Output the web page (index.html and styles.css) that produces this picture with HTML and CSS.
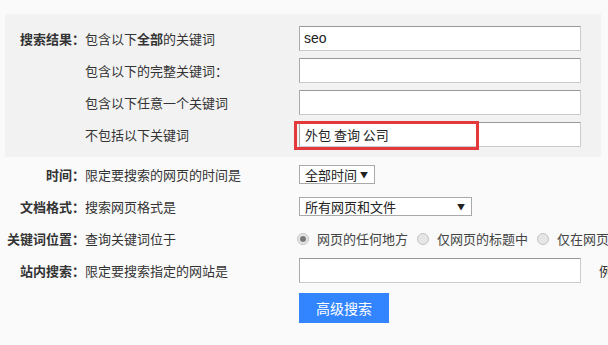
FILE: index.html
```html
<!DOCTYPE html>
<html lang="zh-CN">
<head>
<meta charset="utf-8">
<title>高级搜索</title>
<link rel="stylesheet" href="styles.css">
</head>
<body>
<div class="page">
  <div class="panel">
    <div class="row">
      <div class="label">搜索结果：</div>
      <div class="desc">包含以下<b>全部</b>的关键词</div>
      <div class="field"><div class="input">seo</div></div>
    </div>
    <div class="row">
      <div class="label"></div>
      <div class="desc">包含以下的完整关键词：</div>
      <div class="field"><div class="input"></div></div>
    </div>
    <div class="row">
      <div class="label"></div>
      <div class="desc">包含以下任意一个关键词</div>
      <div class="field"><div class="input"></div></div>
    </div>
    <div class="row">
      <div class="label"></div>
      <div class="desc">不包括以下关键词</div>
      <div class="field">
        <div class="input cjk">外包 查询 公司</div>
        <div class="highlight"></div>
      </div>
    </div>
  </div>

  <div class="section">
    <div class="row">
      <div class="label">时间：</div>
      <div class="desc">限定要搜索的网页的时间是</div>
      <div class="field"><div class="select select-short"><span>全部时间</span><span class="arrow">▼</span></div></div>
    </div>
    <div class="row">
      <div class="label">文档格式：</div>
      <div class="desc">搜索网页格式是</div>
      <div class="field"><div class="select select-long"><span>所有网页和文件</span><span class="arrow">▼</span></div></div>
    </div>
    <div class="row">
      <div class="label">关键词位置：</div>
      <div class="desc">查询关键词位于</div>
      <div class="radios">
        <span class="radio checked"></span><span class="rtext">网页的任何地方</span>
        <span class="radio"></span><span class="rtext">仅网页的标题中</span>
        <span class="radio"></span><span class="rtext">仅在网页的URL中</span>
      </div>
    </div>
    <div class="row">
      <div class="label">站内搜索：</div>
      <div class="desc">限定要搜索指定的网站是</div>
      <div class="field"><div class="input"></div></div>
      <div class="example">例如：baidu.com</div>
    </div>
    <div class="btn-row">
      <div class="button">高级搜索</div>
    </div>
  </div>
</div>
</body>
</html>
```

FILE: styles.css
```css
html, body {
  margin: 0;
  padding: 0;
}
body {
  background: #fafafa;
  font-family: "Noto Sans CJK SC", "Noto Sans", sans-serif;
  font-size: 13px;
  color: #333;
  overflow: hidden;
  width: 608px;
  height: 345px;
}
.page {
  padding-top: 14px;
  padding-left: 5px;
  width: 900px;
}
.panel {
  background: #f2f2f2;
  width: 596px;
  padding: 12px 0 10px 0;
  display: flex;
  flex-direction: column;
  gap: 7px;
}
.section {
  padding-top: 5px;
  display: flex;
  flex-direction: column;
  gap: 7px;
}
.row {
  display: flex;
  align-items: center;
  height: 25px;
  white-space: nowrap;
}
.label {
  width: 80px;
  flex: none;
  text-align: right;
  font-weight: bold;
  color: #333;
}
.desc {
  width: 214px;
  flex: none;
  color: #333;
}
.desc b {
  font-weight: bold;
}
.field {
  position: relative;
  flex: none;
}
.input {
  box-sizing: border-box;
  width: 282px;
  height: 25px;
  background: #fff;
  border: 1px solid #ccc;
  border-top-color: #999;
  border-left-color: #aaa;
  font-family: "Liberation Sans", Arial, sans-serif;
  font-size: 14px;
  line-height: 23px;
  padding-left: 4px;
  color: #222;
}
.input.cjk {
  font-family: "Noto Sans CJK SC", sans-serif;
  font-size: 13px;
  padding-left: 5px;
}
.highlight {
  position: absolute;
  left: -5px;
  top: -1px;
  width: 185px;
  height: 29px;
  box-sizing: border-box;
  border: 3px solid #e4393c;
}
.select {
  box-sizing: border-box;
  height: 19px;
  background: #fff;
  border: 1px solid #a9a9a9;
  display: flex;
  align-items: center;
  justify-content: space-between;
  padding: 0 6px 0 5px;
  color: #222;
  font-size: 13px;
}
.select-short {
  width: 76px;
}
.select-long {
  width: 173px;
}
.arrow {
  font-size: 8px;
  color: #222;
}
.radios {
  display: flex;
  align-items: center;
  margin-left: -2px;
}
.radio {
  box-sizing: border-box;
  width: 12px;
  height: 12px;
  border-radius: 50%;
  border: 1px solid #c4c4c4;
  background: #e6e6e6;
  flex: none;
  display: flex;
  align-items: center;
  justify-content: center;
  margin-right: 8px;
}
.radio.checked::after {
  content: "";
  width: 6px;
  height: 6px;
  border-radius: 50%;
  background: #7a7a7a;
}
.rtext {
  margin-right: 9px;
  color: #444;
}
.example {
  margin-left: 18px;
  color: #333;
}
.btn-row {
  padding-left: 294px;
  padding-top: 3px;
}
.button {
  width: 90px;
  height: 30px;
  background: #3385ff;
  color: #fff;
  font-size: 14px;
  line-height: 30px;
  text-align: center;
}
```
